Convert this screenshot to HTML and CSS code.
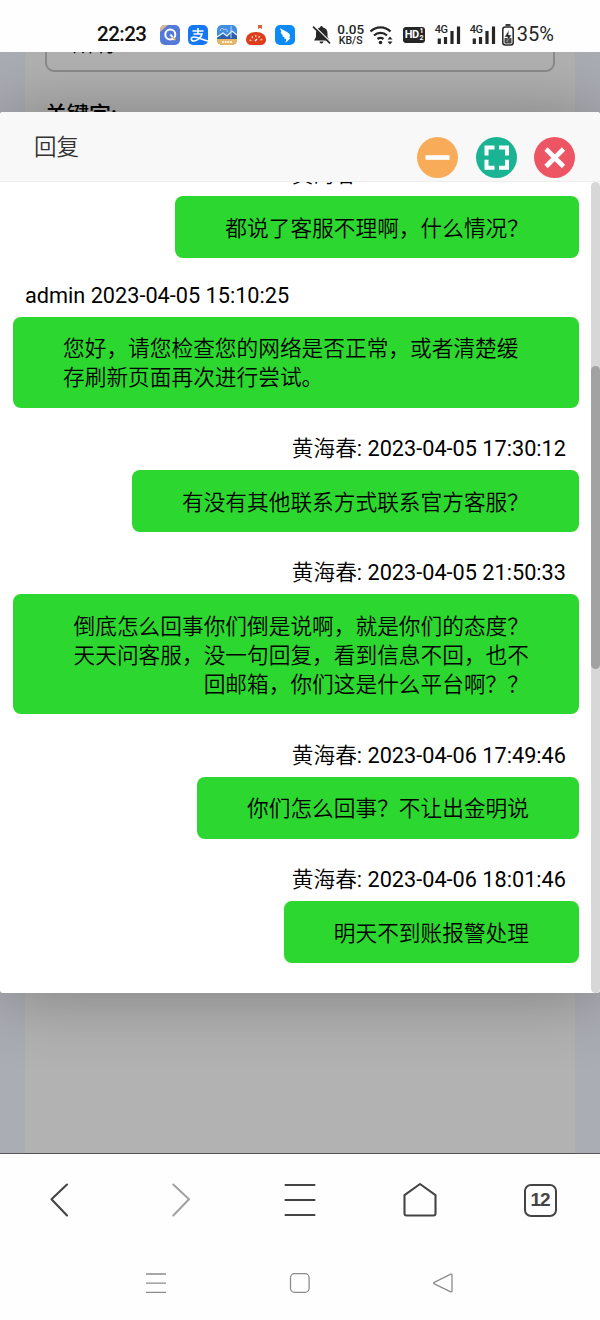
FILE: index.html
```html
<!DOCTYPE html>
<html lang="zh-CN">
<head>
  <meta charset="UTF-8" />
  <meta name="viewport" content="width=device-width, initial-scale=1.0"/>
  <title>回复</title>
  <link rel="stylesheet" href="styles.css">
</head>
<body>

<header class="status-bar">
  <span class="time">22:23</span>
  <div class="apps">
    <svg width="20" height="20" viewBox="0 0 20 20">
      <rect width="20" height="20" rx="5" fill="#5579d8"/>
      <path d="M0 7V5a5 5 0 0 1 5-5h3z" fill="#d9b69a"/>
      <circle cx="10.3" cy="9.5" r="5" fill="none" stroke="#fff" stroke-width="2"/>
      <path d="M10.5 9.5l4 5.5" stroke="#fff" stroke-width="2"/>
      <path d="M12.5 12l3 3" stroke="#d7b45a" stroke-width="1.5"/>
    </svg>
    <svg width="20" height="20" viewBox="0 0 20 20">
      <rect width="20" height="20" rx="5" fill="#1677f2"/>
      <path d="M4.5 6h11M10 3v6M5.5 9h8.5c-1 4-5 7-8.5 7-3 0-3-4 .5-4 4 0 8 2.5 14 4" fill="none" stroke="#fff" stroke-width="1.6"/>
    </svg>
    <svg width="20" height="20" viewBox="0 0 20 20">
      <rect width="20" height="20" rx="5" fill="#438de1"/>
      <path d="M0 13l6-4 4 3 5-5 5 4v4H0z" fill="#2b5fa8"/>
      <path d="M0 12l6-4 4 3 5-5 5 4" fill="none" stroke="#e5f1ff" stroke-width="1.2"/>
      <path d="M3 6c0-3 4-3 4-1 2-2 4 0 3 2M14 1v12" fill="none" stroke="#b9dcff" stroke-width="1"/>
      <path d="M0 14h20v1a5 5 0 0 1-5 5H5a5 5 0 0 1-5-5z" fill="#e9b566"/>
      <path d="M5 17h10" stroke="#fff3d9" stroke-width="2" stroke-dasharray="2 .7"/>
    </svg>
    <svg width="20" height="20" viewBox="0 0 20 20">
      <path d="M12 0h4v4l-2-1-2 1z" fill="#d9633c"/>
      <path d="M0 15c0-5 4-8 10-8s10 3 10 8c0 3-3 5-5 5H5c-2 0-5-2-5-5z" fill="#dd3d1d"/>
      <path d="M4.5 16a5.5 5 0 0 1 11 0" fill="none" stroke="#ffc3a2" stroke-width="2" stroke-dasharray="1.5 2"/>
      <path d="M9 16l2-2" stroke="#fff" stroke-width="1.5"/>
    </svg>
    <svg width="20" height="20" viewBox="0 0 20 20">
      <rect width="20" height="20" rx="5" fill="#0d8bf5"/>
      <path d="M5 3c2 2 6 3 9 5.5 1.5 1.5 1 3 .2 4.5h1.3L10.5 18l.8-4-2.300-.5.7-1-2.700-1.500 1-.5L5.500 7.500l1-.2z" fill="#fff"/>
    </svg>
  </div>
  <div class="signals">
    <svg class="bell" width="19" height="20" viewBox="0 0 19 20">
      <path d="M9.5 1A1.5 1.5 0 0 1 11 2.5C14 3.300 15.500 5.500 15.500 8v4l2 3.500H2L4 12V8c0-3 1.500-4.700 4-5.500A1.500 1.500 0 0 1 9.500 1zM7.500 16.500h4a2 2 0 0 1-4 0z" fill="#262626"/>
      <path d="M2 .6l17 16.800" stroke="#fff" stroke-width="1.2"/>
      <path d="M1 1.6l17 16.800" stroke="#262626" stroke-width="1.6"/>
    </svg>
    <div class="speed"><b>0.05</b><span>KB/S</span></div>
    <svg class="wifi" width="25" height="20" viewBox="0 0 25 20">
      <path d="M1.5 6.5a14 14 0 0 1 20 0M5 10.500a9.500 9.500 0 0 1 13 0M8.500 14a5 5 0 0 1 6 0" fill="none" stroke="#262626" stroke-width="2.3"/>
      <circle cx="11.5" cy="17.5" r="1.8" fill="#262626"/>
      <path d="M18.5 14.5l2.500-3 2.500 3zM18.500 16.500h5l-2.500 3z" fill="#262626"/>
    </svg>
    <span class="hd">HD<small><i>1</i><i>2</i></small></span>
    <div class="cell">
      <span>4G</span>
      <svg width="26" height="20" viewBox="0 0 26 20">
        <path d="M4.3 13.5v5.5M10.5 12v7M17 6v13M23.5 1.5V19" stroke="#262626" stroke-width="3.2"/>
      </svg>
    </div>
    <div class="cell cell-2">
      <span>4G</span>
      <svg width="26" height="20" viewBox="0 0 26 20">
        <path d="M4.3 13.5v5.5M10.5 12v7M17 6v13M23.5 1.5V19" stroke="#262626" stroke-width="3.2"/>
      </svg>
    </div>
    <svg class="battery" width="12" height="22" viewBox="0 0 12 22">
      <path d="M3.5 1h5" stroke="#262626" stroke-width="1.8"/>
      <rect x=".8" y="3" width="10.4" height="18" rx="2.5" fill="none" stroke="#262626" stroke-width="1.5"/>
      <path d="M2.5 14h7v5.5h-7z" fill="#444"/>
      <path d="M7 6L2.5 13h3L5 18l4.5-7h-3z" fill="#262626" stroke="#fff" stroke-width=".4"/>
    </svg>
    <span class="percent">35%</span>
  </div>
</header>

<main class="page">
  <div class="form-panel">
    <div class="select">所有</div>
    <label class="field-label">关键字:</label>
  </div>

  <section class="dialog">
    <div class="dialog-title">
      <h2>回复</h2>
      <div class="dialog-btns">
        <button class="btn min">
          <svg width="41" height="41" viewBox="0 0 41 41"><path d="M8.5 20.5h24" stroke="#fff" stroke-width="4.6"/></svg>
        </button>
        <button class="btn max">
          <svg width="41" height="41" viewBox="0 0 41 41"><path d="M10.5 18.5v-8h8M23 10.5h8v8M31 22.8v8h-8M18.5 30.8h-8v-8" fill="none" stroke="#fff" stroke-width="4"/></svg>
        </button>
        <button class="btn close">
          <svg width="41" height="41" viewBox="0 0 41 41"><path d="M12 12l17.5 17.5M29.5 12L12 29.5" stroke="#fff" stroke-width="4.6"/></svg>
        </button>
      </div>
    </div>

    <div class="dialog-body">
      <div class="chat">
        <div class="msg mine">
          <div class="meta"><span class="name">黄海春</span>: 2023-04-05 15:02:36</div>
          <div class="bubble">都说了客服不理啊，什么情况？</div>
        </div>
        <div class="msg admin">
          <div class="meta">admin 2023-04-05 15:10:25</div>
          <div class="bubble">您好，请您检查您的网络是否正常，或者清楚缓存刷新页面再次进行尝试。</div>
        </div>
        <div class="msg mine">
          <div class="meta"><span class="name">黄海春</span>: 2023-04-05 17:30:12</div>
          <div class="bubble">有没有其他联系方式联系官方客服？</div>
        </div>
        <div class="msg mine">
          <div class="meta"><span class="name">黄海春</span>: 2023-04-05 21:50:33</div>
          <div class="bubble">倒底怎么回事你们倒是说啊，就是你们的态度？天天问客服，没一句回复，看到信息不回，也不回邮箱，你们这是什么平台啊？？</div>
        </div>
        <div class="msg mine">
          <div class="meta"><span class="name">黄海春</span>: 2023-04-06 17:49:46</div>
          <div class="bubble">你们怎么回事？不让出金明说</div>
        </div>
        <div class="msg mine">
          <div class="meta"><span class="name">黄海春</span>: 2023-04-06 18:01:46</div>
          <div class="bubble">明天不到账报警处理</div>
        </div>
      </div>
      <div class="scrollbar"><div class="thumb"></div></div>
    </div>
  </section>
</main>

<nav class="toolbar">
  <svg width="36" height="36" viewBox="0 0 36 36"><path d="M25 2.5L9.5 17.3 25 33.5"/></svg>
  <svg class="off" width="36" height="36" viewBox="0 0 36 36"><path d="M11.3 2.5L27 17.3 11.3 33.5"/></svg>
  <svg width="36" height="36" viewBox="0 0 36 36"><path d="M3.5 3h29M3.5 18h29M3.5 33h29"/></svg>
  <svg width="36" height="36" viewBox="0 0 36 36"><path d="M18 2l15.5 11.2v18.3q0 2-2 2h-27q-2 0-2-2V13.2z"/></svg>
  <span class="tabs">12</span>
</nav>

<footer class="system-nav">
  <svg width="24" height="24" viewBox="0 0 24 24"><path d="M2 3h20M2 12.2h20M2 21.3h20"/></svg>
  <svg width="24" height="24" viewBox="0 0 24 24"><rect x="2.5" y="2.7" width="18.6" height="18.6" rx="4"/></svg>
  <svg width="24" height="24" viewBox="0 0 24 24"><path d="M19.8 3.2q1.2-.4 1.2 1v15.6q0 1.5-1.2 1L3.3 12.9q-1.2-.8 0-1.5z"/></svg>
</footer>

</body>
</html>
```

FILE: styles.css
```css
* {
  box-sizing: border-box;
}
body {
  margin: 0;
  height: 1320px;
  display: flex;
  flex-direction: column;
  background: #fefefe;
  color: #000;
  font-family: Roboto, "Noto Sans CJK SC", sans-serif;
  font-size: 21.7px;
  line-height: 29px;
  overflow: hidden;
}

/* status bar */
.status-bar {
  height: 52px;
  padding: 17px 0 0 97px;
  display: flex;
  align-items: center;
  color: #262626;
}
.time {
  width: 62.5px;
  font-size: 20.5px;
  font-weight: 500;
  letter-spacing: -0.5px;
  color: #111;
}
.apps {
  display: flex;
  gap: 8.8px;
}
.signals {
  display: flex;
  align-items: center;
}
.bell {
  margin-left: 17px;
}
.speed {
  width: 30px;
  margin-left: 5px;
  display: flex;
  flex-direction: column;
  align-items: center;
  line-height: 11px;
}
.speed b {
  font-size: 13.5px;
  font-weight: 500;
}
.speed span {
  font-size: 10.5px;
  font-weight: 500;
}
.wifi {
  margin-left: 3px;
}
.hd {
  width: 22px;
  height: 16px;
  margin-left: 9px;
  padding-left: 2px;
  display: flex;
  align-items: center;
  border-radius: 3px;
  background: #262626;
  color: #fff;
  font-size: 11px;
  font-weight: 700;
  letter-spacing: -0.5px;
}
.hd small {
  display: flex;
  flex-direction: column;
  margin-left: 1px;
  font-size: 7px;
  line-height: 6.5px;
}
.hd i {
  font-style: normal;
}
.cell {
  position: relative;
  width: 26px;
  height: 20px;
  margin-left: 10px;
}
.cell-2 {
  margin-left: 9px;
}
.cell svg {
  display: block;
}
.cell span {
  position: absolute;
  left: 0;
  top: 0;
  font-size: 11px;
  font-weight: 500;
  letter-spacing: -0.5px;
  line-height: 10px;
}
.battery {
  margin-left: 6px;
}
.percent {
  margin-left: 3px;
  font-size: 20px;
}

/* dimmed page behind the dialog */
.page {
  position: relative;
  height: 1102px;
  padding: 0 25px;
  background: #abadb4;
  border-bottom: 1px solid #555;
  overflow: hidden;
}
.form-panel {
  display: flow-root;
  height: 100%;
  padding: 0 20px;
  background: #b2b2b2;
}
.select {
  height: 50px;
  margin-top: -30px;
  padding: 5px 26px;
  border: 2px solid #8b8b8b;
  border-radius: 9px;
  font-weight: 350;
}
.field-label {
  display: block;
  margin-top: 28px;
  font-size: 22px;
  font-weight: 500;
}

/* dialog */
.dialog {
  position: absolute;
  left: 0;
  top: 60px;
  width: 600px;
  height: 881px;
  display: flex;
  flex-direction: column;
  border-radius: 3px;
  background: #fff;
  box-shadow: 1px 1px 72px rgba(0, 0, 0, 0.3);
}
.dialog-title {
  height: 70px;
  padding: 0 25px 0 34px;
  display: flex;
  align-items: center;
  justify-content: space-between;
  border-bottom: 1px solid #eee;
  border-radius: 3px 3px 0 0;
  background: #f8f8f8;
}
h2 {
  margin: 0 0 3px;
  font-family: "Noto Sans CJK SC", sans-serif;
  font-size: 22.5px;
  font-weight: 350;
  color: #333;
}
.dialog-btns {
  display: flex;
  gap: 17.5px;
  margin-top: 22px;
}
.btn {
  width: 41px;
  height: 41px;
  padding: 0;
  border: none;
  border-radius: 50%;
}
.btn svg {
  display: block;
}
.min {
  background: #f8ac59;
}
.max {
  background: #1ab394;
}
.close {
  background: #ed5565;
}
.dialog-body {
  flex: 1;
  min-height: 0;
  display: flex;
}

/* messages */
.chat {
  flex: 1;
  padding: 0 12px 0 13px;
  overflow: hidden;
}
.msg {
  margin-bottom: 25.3px;
  display: flex;
  flex-direction: column;
  align-items: flex-start;
}
.msg:first-child {
  margin-top: -23px;
}
.admin {
  margin-top: -29px;
  padding-top: 25.6px;
}
.mine {
  align-items: flex-end;
  text-align: right;
}
.meta {
  padding: 1px 13px 0 12px;
  margin-bottom: 7px;
}
.name {
  font-weight: 350;
}
.bubble {
  padding: 17.5px 50px 15.5px;
  border-radius: 8px;
  background: #2cd82f;
  font-weight: 350;
}
.scrollbar {
  width: 9px;
  padding-top: 184px;
  border-radius: 5px;
  background: #d7d7d7;
}
.thumb {
  height: 303px;
  border-radius: 5px;
  background: #a2a2a2;
}

/* browser toolbar */
.toolbar {
  height: 92px;
  display: grid;
  grid-template-columns: repeat(5, 1fr);
  align-items: center;
  justify-items: center;
}
.toolbar svg {
  fill: none;
  stroke: #444;
  stroke-width: 2.1;
  stroke-linecap: round;
  stroke-linejoin: round;
}
.toolbar .off {
  stroke: #a2a2a2;
}
.tabs {
  width: 33px;
  height: 33px;
  border: 2px solid #444;
  border-radius: 7px;
  color: #444;
  font-family: "Liberation Sans", sans-serif;
  font-size: 19px;
  font-weight: 700;
  letter-spacing: -1px;
  line-height: 28px;
  text-align: center;
}

/* system keys */
.system-nav {
  height: 74px;
  padding-right: 1px;
  display: flex;
  align-items: center;
  justify-content: center;
  gap: 119.5px;
}
.system-nav svg {
  fill: none;
  stroke: #8c8c8c;
  stroke-width: 1.3;
}
```
